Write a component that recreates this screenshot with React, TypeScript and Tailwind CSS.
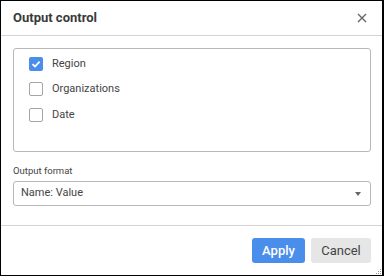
import { useState } from 'react';

const items = [
  { id: 'region', label: 'Region' },
  { id: 'orgs', label: 'Organizations' },
  { id: 'date', label: 'Date' },
];

export default function App() {
  const [checked, setChecked] = useState<Record<string, boolean>>({ region: true });

  return (
    <div
      className="w-[384px] h-[276px] bg-white border-l border-t border-b border-r-2 border-black flex flex-col text-[#333]"
      style={{ fontFamily: 'Roboto, "Liberation Sans", sans-serif' }}
    >
      {/* header */}
      <div className="h-[35px] shrink-0 border-b border-[#d4d4d4] flex items-center justify-between pl-[12px] pr-[15px]">
        <span className="text-[13px] font-bold text-[#3a3a3a]">Output control</span>
        <button className="w-[10px] h-[10px] flex items-center justify-center text-[#666]">
          <svg width="10" height="10" viewBox="0 0 10 10" fill="none" stroke="currentColor" strokeWidth={1.4}>
            <path d="M1 1L9 9M9 1L1 9" />
          </svg>
        </button>
      </div>

      {/* body */}
      <div className="flex-1 flex flex-col pl-[12px] pr-[11px] pt-[12px]">
        <div className="h-[104px] border border-[#b8b8b8] rounded-[3px] pt-[2px] pl-[15px]">
          {items.map((it) => {
            const on = !!checked[it.id];
            return (
              <label
                key={it.id}
                className="h-[25.5px] flex items-center gap-[9px] cursor-pointer"
                onClick={() => setChecked({ ...checked, [it.id]: !on })}
              >
                {on ? (
                  <span className="w-[14px] h-[14px] rounded-[2px] bg-[#4a8eec] flex items-center justify-center">
                    <svg width="10" height="10" viewBox="0 0 10 10" fill="none" stroke="white" strokeWidth={1.8}>
                      <path d="M1.5 5.2L4 7.5L8.6 2.6" />
                    </svg>
                  </span>
                ) : (
                  <span className="w-[14px] h-[14px] rounded-[2px] border-[1.5px] border-[#a6a6a6] bg-white" />
                )}
                <span className="text-[11px] text-[#444]">{it.label}</span>
              </label>
            );
          })}
        </div>

        <div className="mt-[13px] h-[12px] flex items-center text-[9.5px] text-[#444]">Output format</div>
        <div className="mt-[4px] h-[25px] border border-[#b8b8b8] rounded-[3px] flex items-center justify-between pl-[7px] pr-[9px]">
          <span className="text-[11px] text-[#444]">Name: Value</span>
          <svg width="6" height="4" viewBox="0 0 6 4" fill="#666">
            <path d="M0 0H6L3 4Z" />
          </svg>
        </div>
      </div>

      {/* footer */}
      <div className="h-[50px] shrink-0 border-t border-[#d4d4d4] flex items-center justify-end gap-[6px] pr-[11px] relative">
        <button className="w-[53px] h-[25px] rounded-[3px] bg-[#4a8eec] text-white text-[13px] font-medium">Apply</button>
        <button className="w-[60px] h-[25px] rounded-[3px] bg-[#e6e6e6] text-[#444] text-[13px]">Cancel</button>
        <svg className="absolute right-[1px] bottom-[1px]" width="5" height="5" viewBox="0 0 5 5" fill="#999">
          <rect x="4" y="0" width="1" height="1" />
          <rect x="2" y="2" width="1" height="1" />
          <rect x="4" y="2" width="1" height="1" />
          <rect x="0" y="4" width="1" height="1" />
          <rect x="2" y="4" width="1" height="1" />
          <rect x="4" y="4" width="1" height="1" />
        </svg>
      </div>
    </div>
  );
}
